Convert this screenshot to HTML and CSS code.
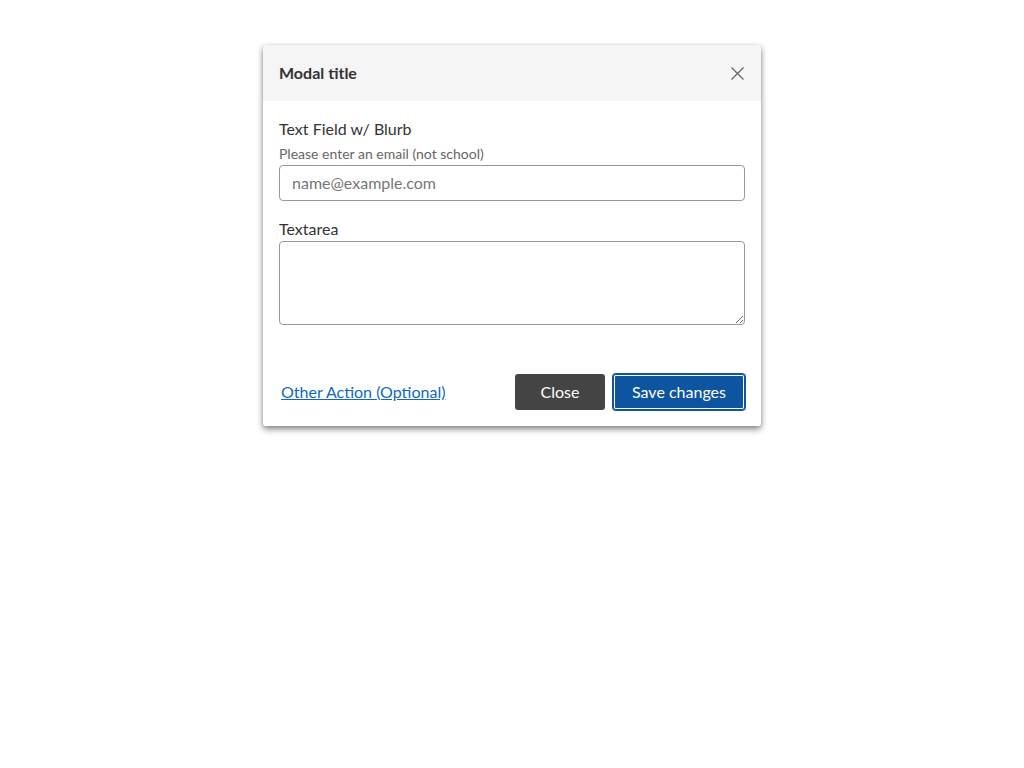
FILE: index.html
```html
<!DOCTYPE html>
<html lang="en">
<head>
<meta charset="utf-8">
<title>Modal</title>
<link rel="stylesheet" href="styles.css">
</head>
<body>
<div class="page">
<div class="modal" role="dialog" aria-labelledby="modal-title">
  <div class="modal-header">
    <h2 class="modal-title" id="modal-title">Modal title</h2>
    <button class="icon-close" aria-label="Close">
      <svg width="13" height="13" viewBox="0 0 13 13" aria-hidden="true">
        <path d="M0.5 0.5L12.5 12.5M12.5 0.5L0.5 12.5" stroke="#666" stroke-width="1.3" fill="none"/>
      </svg>
    </button>
  </div>
  <div class="modal-body">
    <div class="field">
      <label class="field-label" for="email">Text Field w/ Blurb</label>
      <div class="field-blurb">Please enter an email (not school)</div>
      <input class="input" id="email" type="text" placeholder="name@example.com">
    </div>
    <div class="field">
      <label class="field-label" for="ta">Textarea</label>
      <textarea class="textarea" id="ta"></textarea>
    </div>
  </div>
  <div class="modal-footer">
    <a class="link" href="#">Other Action (Optional)</a>
    <div class="actions">
      <button class="btn btn-dark">Close</button>
      <button class="btn btn-primary">Save changes</button>
    </div>
  </div>
</div>
</div>
</body>
</html>
```
FILE: styles.css
```css
* { box-sizing: border-box; }
html, body { margin: 0; padding: 0; background: #fff; }
body {
  font-family: Lato, "Open Sans", sans-serif;
  color: #333;
}
.page {
  min-height: 768px;
  padding-top: 45px;
}
.modal {
  width: 498px;
  margin: 0 auto;
  background: #fff;
  border-radius: 2px;
  box-shadow: 0 3px 6px rgba(0, 0, 0, 0.5), 0 0 1px rgba(0,0,0,0.25);
}
.modal-header {
  height: 56px;
  background: #f5f5f5;
  display: flex;
  align-items: center;
  justify-content: space-between;
  padding: 0 17px 0 16px;
  border-radius: 2px 2px 0 0;
}
.modal-title {
  margin: 0 0 2px;
  font-size: 16px;
  font-weight: 700;
  color: #333;
}
.icon-close {
  background: none;
  border: 0;
  padding: 0;
  width: 13px;
  height: 13px;
  display: flex;
  cursor: pointer;
}
.modal-body {
  padding: 17px 16px 0;
}
.field { margin-bottom: 17px; }
.field:last-child { margin-bottom: 0; }
.field-label {
  display: block;
  font-size: 16px;
  line-height: 22px;
  color: #333;
}
.field-blurb {
  font-size: 14px;
  line-height: 20px;
  color: #666;
  margin-top: 4px;
  margin-bottom: 1px;
}
.input {
  display: block;
  width: 100%;
  height: 36px;
  border: 1px solid #999;
  border-radius: 4px;
  padding: 0 12px 2px;
  font-family: inherit;
  font-size: 16px;
  color: #333;
  background: #fff;
}
.input::placeholder { color: #767676; }
.textarea {
  display: block;
  width: 100%;
  height: 84px;
  border: 1px solid #999;
  border-radius: 4px;
  padding: 8px 12px;
  font-family: inherit;
  font-size: 16px;
  margin-top: 1px;
  resize: vertical;
}
.modal-footer {
  display: flex;
  align-items: center;
  justify-content: space-between;
  padding: 49px 16px 16px 18px;
}
.link {
  color: #0e68c3;
  font-size: 16px;
  text-decoration: underline;
  margin-bottom: 2px;
}
.actions {
  display: flex;
  align-items: center;
  gap: 8px;
}
.btn {
  height: 36px;
  border: 0;
  border-radius: 3px;
  padding: 0 0 2px;
  font-family: inherit;
  font-size: 16px;
  color: #fff;
  cursor: pointer;
}
.btn-dark {
  width: 90px;
  background: #444;
}
.btn-primary {
  width: 132px;
  background: #0d55a1;
  border-radius: 3px;
  box-shadow: 0 0 0 1px #0d55a1, inset 0 0 0 1px #0d55a1, inset 0 0 0 2px #fff;
}
```
